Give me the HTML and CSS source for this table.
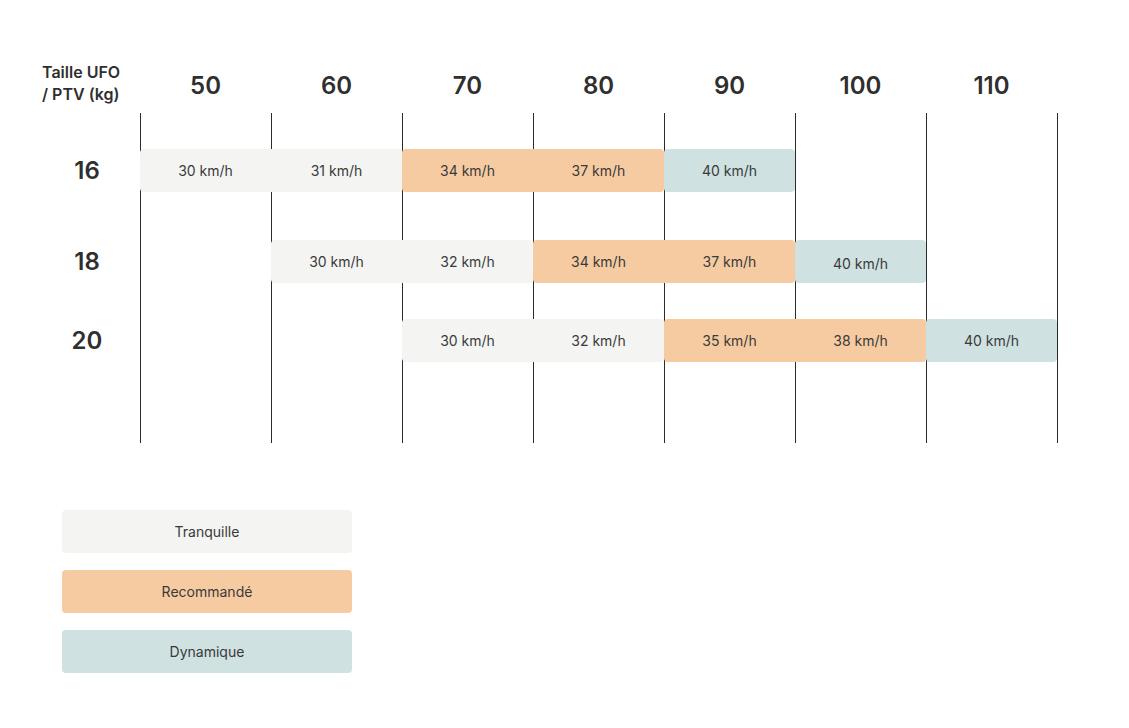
FILE: index.html
```html
<!DOCTYPE html>
<html lang="fr">
<head>
<meta charset="utf-8">
<title>Taille UFO / PTV</title>
<link rel="stylesheet" href="styles.css">
</head>
<body>
<div class="page">
  <div class="chart">
    <div class="head">
      <div class="corner">Taille UFO<br>/ PTV (kg)</div>
      <div class="col">50</div>
      <div class="col">60</div>
      <div class="col">70</div>
      <div class="col">80</div>
      <div class="col">90</div>
      <div class="col">100</div>
      <div class="col">110</div>
    </div>
    <div class="body">
      <div class="lines"></div>

      <div class="label r1">16</div>
      <div class="bar calm r1 c2">
        <span>30 km/h</span><span>31 km/h</span>
      </div>
      <div class="bar rec r1 c4">
        <span>34 km/h</span><span>37 km/h</span>
      </div>
      <div class="bar dyn r1 c6">
        <span>40 km/h</span>
      </div>

      <div class="label r2">18</div>
      <div class="bar calm r2 c3">
        <span>30 km/h</span><span>32 km/h</span>
      </div>
      <div class="bar rec r2 c5">
        <span>34 km/h</span><span>37 km/h</span>
      </div>
      <div class="bar dyn r2 c7 shift">
        <span>40 km/h</span>
      </div>

      <div class="label r3">20</div>
      <div class="bar calm r3 c4">
        <span>30 km/h</span><span>32 km/h</span>
      </div>
      <div class="bar rec r3 c6">
        <span>35 km/h</span><span>38 km/h</span>
      </div>
      <div class="bar dyn r3 c8">
        <span>40 km/h</span>
      </div>
    </div>
  </div>

  <div class="legend">
    <div class="key calm">Tranquille</div>
    <div class="key rec">Recommandé</div>
    <div class="key dyn">Dynamique</div>
  </div>
</div>
</body>
</html>
```

FILE: styles.css
```css
* { box-sizing: border-box; }

html, body {
  margin: 0;
  padding: 0;
  background: #ffffff;
}

body {
  font-family: "Inter", "Noto Sans", "Liberation Sans", sans-serif;
  color: #333333;
}

.page {
  padding: 60px 0 0 42px;
}

.chart {
  width: 1016px;
}

.head {
  display: grid;
  grid-template-columns: 98px repeat(7, 131px);
  height: 53px;
}

.corner {
  font-size: 16px;
  font-weight: 600;
  line-height: 22px;
  color: #2f2f2f;
  margin-top: 1px;
}

.col {
  font-size: 24px;
  font-weight: 600;
  color: #2f2f2f;
  text-align: center;
  padding-top: 12px;
  line-height: 28px;
}

.body {
  display: grid;
  grid-template-columns: 98px repeat(7, 131px);
  grid-template-rows: 36px 43px 48px 43px 36px 43px 81px;
}

.lines {
  grid-column: 2 / span 7;
  grid-row: 1 / -1;
  width: 918px;
  background: repeating-linear-gradient(90deg, #2b2b2b 0 1px, transparent 1px 131px);
}

.label {
  grid-column: 1;
  padding-right: 8px;
  text-align: center;
  font-size: 24px;
  font-weight: 600;
  color: #2f2f2f;
  display: flex;
  align-items: center;
  justify-content: center;
}

.r1 { grid-row: 2; }
.r2 { grid-row: 4; }
.r3 { grid-row: 6; }

.c2 { grid-column: 2 / span 2; }
.c3 { grid-column: 3 / span 2; }
.c4 { grid-column: 4 / span 2; }
.c5 { grid-column: 5 / span 2; }
.c6 { grid-column: 6 / span 2; }
.c7 { grid-column: 7 / span 1; }
.c8 { grid-column: 8 / span 1; }
.bar.c6.dyn, .bar.c7.dyn, .bar.c8.dyn { }
.r1.dyn.c6 { grid-column: 6 / span 1; }

.bar {
  display: flex;
  border-radius: 4px;
  font-size: 14px;
  color: #3a3a3a;
  z-index: 1;
}

.bar span {
  flex: 1 1 0;
  display: flex;
  align-items: center;
  justify-content: center;
}

.shift span {
  padding-top: 3px;
}

.calm { background: #f4f4f2; }
.rec { background: #f6cba2; }
.dyn { background: #cfe1e1; }

.legend {
  margin: 67px 0 0 20px;
  display: flex;
  flex-direction: column;
  gap: 17px;
  width: 290px;
}

.key {
  height: 43px;
  border-radius: 4px;
  display: flex;
  align-items: center;
  justify-content: center;
  font-size: 14px;
  color: #3a3a3a;
}
```
